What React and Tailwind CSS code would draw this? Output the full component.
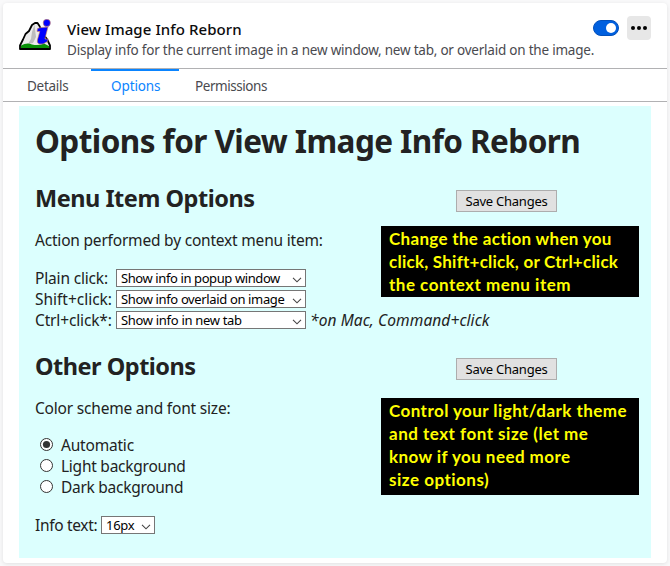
function T({ children, className = "" }) {
  return <span className={"whitespace-nowrap " + className}>{children}</span>;
}

function Select({ children, className = "", track }) {
  return (
    <div className={"flex h-[18px] shrink-0 items-center justify-between border border-[#767676] bg-white pl-1 pr-[3px] font-['Noto_Sans',sans-serif] text-[13px] leading-4 text-black " + className}>
      <T className={track}>{children}</T>
      <svg width="10" height="6" viewBox="0 0 10 6" className="mt-[3px] shrink-0" fill="none" stroke="#444" strokeWidth="1.1">
        <path d="M1 0.8 L5 4.8 L9 0.8" />
      </svg>
    </div>
  );
}

function SaveButton() {
  return (
    <button className="ml-[75px] flex h-[22px] w-[101px] items-center justify-center border border-[#adadad] bg-[#e1e1e1] font-['Noto_Sans',sans-serif] text-[13px] leading-4 text-black">
      <T className="tracking-[-0.24px]">Save Changes</T>
    </button>
  );
}

function Radio({ checked, label, track }) {
  return (
    <div className="flex h-[21px] items-center">
      <svg width="13" height="13" viewBox="0 0 13 13" className="mb-[2px] ml-[5px] mr-2">
        <circle cx="6.5" cy="6.5" r="6" fill="#fff" stroke="#333" />
        {checked && <circle cx="6.5" cy="6.5" r="3.6" fill="#333" />}
      </svg>
      <T className={track}>{label}</T>
    </div>
  );
}

function Callout({ className, children }) {
  return (
    <div className={"flex flex-col items-start bg-black pl-2 pt-px font-[Lato,sans-serif] text-[17px] font-bold leading-[23px] text-[#ff0] " + className}>
      {children}
    </div>
  );
}

function Logo() {
  return (
    <svg width="32" height="32" viewBox="0 0 32 32">
      <path d="M1 30 V26.500 L4 20.500 L6.500 15 L10 12 L13 6 L16 4 H18.500 L20.500 7 L24 15 L28 20 L31 26.500 V30 Z" fill="#ececec" stroke="#000" strokeWidth="1.800" strokeLinejoin="round" />
      <path d="M15.500 6 L13 13 L12 20 L9 25 L14 24 L17 18 Z" fill="#bdbdbd" />
      <path d="M2 29 V26.500 Q8 23 13 25.500 Q20 27 25 24.500 L30 27 V29 Z" fill="#089008" />
      <path d="M18.500 9.500 Q22 8 29 8 L26 19.500 Q26 21 29 19.500 L28.500 22.500 Q24 26 20 25 Q17.500 23.500 18.500 20.500 L20.800 12.500 L18 12.500 Z" fill="#00f" stroke="#d98a5a" strokeWidth=".6" />
      <circle cx="27.800" cy="3.900" r="3.600" fill="#00f" stroke="#d98a5a" strokeWidth=".6" />
    </svg>
  );
}

const clicks = [
  { label: "Plain click:", lt: "tracking-[-0.17px]", value: "Show info in popup window", vt: "tracking-[-0.4px]" },
  { label: "Shift+click:", lt: "tracking-[-0.02px]", value: "Show info overlaid on image", vt: "tracking-[-0.36px]" },
  { label: "Ctrl+click*:", lt: "tracking-[-0.15px]", value: "Show info in new tab", vt: "tracking-[-0.31px]", note: "*on Mac, Command+click" },
];

export default function App() {
  return (
    <div className="h-[566px] w-[670px] bg-[#f9f9fa] p-[3px] font-['Noto_Sans',sans-serif]">
      <main className="h-[560px] w-[664px] rounded bg-white shadow-[0_1px_4px_rgba(12,12,13,0.1)]">
        <header className="flex h-[65px] px-4 pt-[13px]">
          <div className="pt-[3px]"><Logo /></div>
          <div className="ml-4 flex w-[526px] flex-col pt-[2px]">
            <T className="text-[15px] font-medium leading-[22px] tracking-[0.08px] text-[#0c0c0d]">View Image Info Reborn</T>
            <T className="text-[13.5px] leading-[21px] tracking-[-0.22px] text-[#4a4a4f]">Display info for the current image in a new window, new tab, or overlaid on the image.</T>
          </div>
          <div className="mt-1 flex h-4 w-[26px] justify-end rounded-full border border-[#0250bb] bg-[#0060df] p-[2px]">
            <div className="size-[10px] rounded-full bg-white" />
          </div>
          <div className="ml-2 flex size-6 items-center justify-center gap-[2px] rounded-sm bg-[#e7e7e7]">
            <i className="size-1 rounded-full bg-black" />
            <i className="size-1 rounded-full bg-black" />
            <i className="size-1 rounded-full bg-black" />
          </div>
        </header>
        <nav className="flex h-[34px] border-y border-[#b1b1b3] text-[13.5px] leading-[34px] text-[#4a4a4f]">
          <div className="w-[88px] pl-6"><T className="tracking-[-0.27px]">Details</T></div>
          <div className="w-[88px] border-t-2 border-[#0a84ff] pl-5 leading-[30px] text-[#0a84ff]"><T className="tracking-[-0.1px]">Options</T></div>
          <div className="pl-4"><T className="tracking-[-0.45px]">Permissions</T></div>
        </nav>
        <div className="mx-4 mt-1 h-[452px] bg-[#dcfffe] px-4 pt-[15px] text-[15.5px] leading-[21px] text-[#222]">
          <h1 className="h-[69px] text-[31.5px] font-bold leading-[40px] tracking-[-0.57px]"><T>Options for View Image Info Reborn</T></h1>
          <section className="grid h-[168px] grid-cols-[346px_258px]">
            <div>
              <h2 className="h-[40px] text-[23.5px] font-bold leading-[16px] tracking-[-0.48px]"><T>Menu Item Options</T></h2>
              <p className="h-[37px] tracking-[-0.2px]"><T>Action performed by context menu item:</T></p>
              {clicks.map((c) => (
                <div key={c.label} className="flex h-[21px] items-center pt-px">
                  <div className="w-[81px] shrink-0"><T className={c.lt}>{c.label}</T></div>
                  <Select className="w-[190px]" track={c.vt}>{c.value}</Select>
                  {c.note && <T className="ml-1 italic tracking-[0.1px]">{c.note}</T>}
                </div>
              ))}
            </div>
            <div>
              <SaveButton />
              <Callout className="mt-[14px] h-[71px]">
                <T className="tracking-[0.32px]">Change the action when you</T>
                <T className="tracking-[0.24px]">click, Shift+click, or Ctrl+click</T>
                <T className="tracking-[0.5px]">the context menu item</T>
              </Callout>
            </div>
          </section>
          <section className="grid grid-cols-[346px_258px]">
            <div>
              <h2 className="h-[40px] text-[23.5px] font-bold leading-[16px] tracking-[-0.5px]"><T>Other Options</T></h2>
              <p className="h-[37px] tracking-[-0.2px]"><T>Color scheme and font size:</T></p>
              <Radio checked label="Automatic" track="tracking-[-0.2px]" />
              <Radio label="Light background" track="tracking-[-0.25px]" />
              <Radio label="Dark background" track="tracking-[-0.28px]" />
              <div className="mt-4 flex h-[21px] items-center pt-px">
                <div className="w-[66px]"><T className="tracking-[-0.33px]">Info text:</T></div>
                <Select className="w-[54px]" track="tracking-[-0.25px]">16px</Select>
              </div>
            </div>
            <div>
              <SaveButton />
              <Callout className="mt-[18px] h-[97px]">
                <T className="tracking-[0.44px]">Control your light/dark theme</T>
                <T className="tracking-[0.5px]">and text font size (let me</T>
                <T className="tracking-[0.43px]">know if you need more</T>
                <T className="tracking-[0.5px]">size options)</T>
              </Callout>
            </div>
          </section>
        </div>
      </main>
    </div>
  );
}
